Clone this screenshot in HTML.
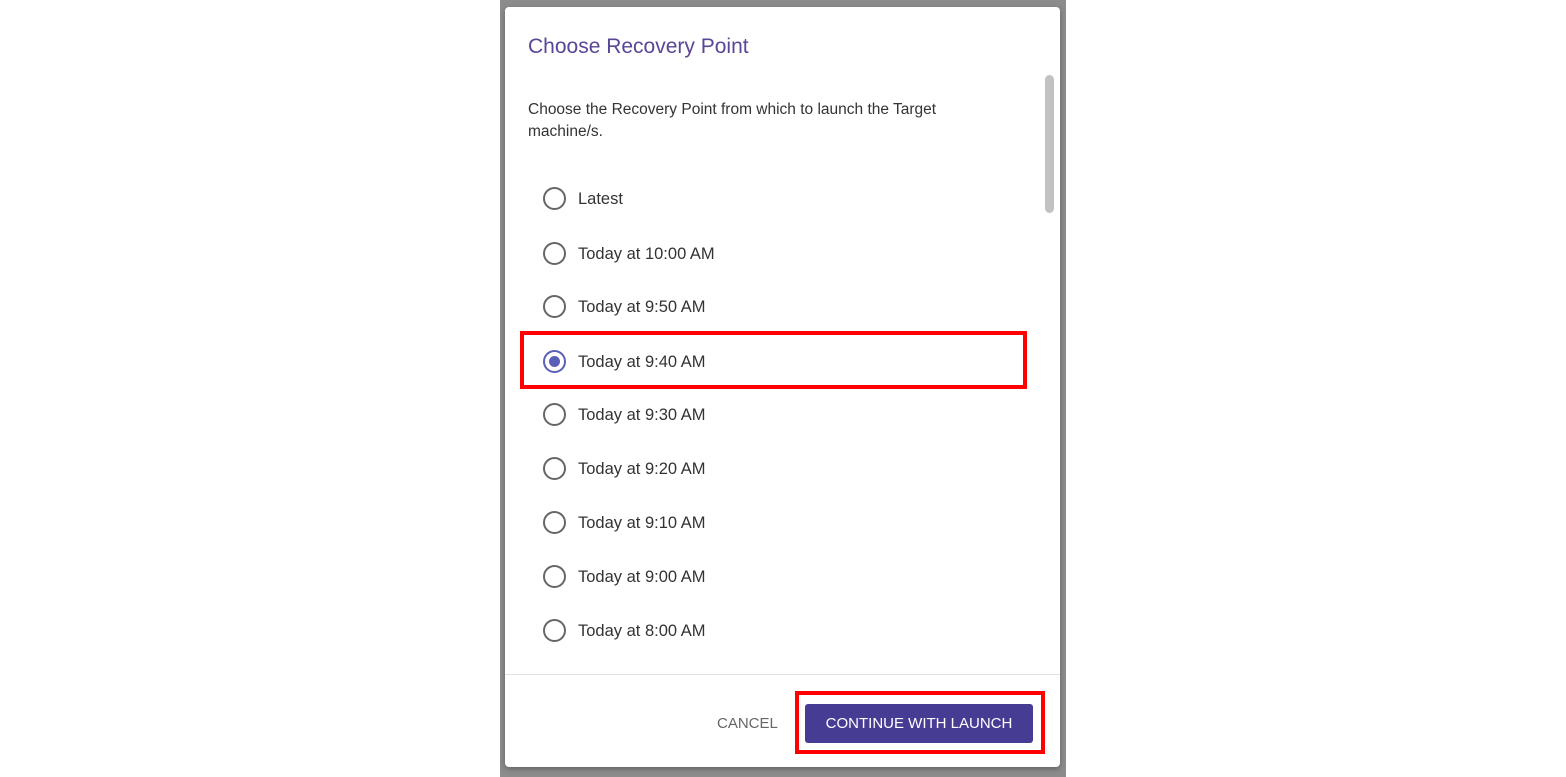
<!DOCTYPE html>
<html><head><style>
body{margin:0;width:1566px;height:777px;background:#fff;position:relative;overflow:hidden;font-family:"Liberation Sans",sans-serif;}
.ov{position:absolute;left:500px;top:0;width:566px;height:777px;background:#8c8c8c;}
.dlg{position:absolute;left:505px;top:7px;width:555px;height:760px;background:#fff;border-radius:4px;box-shadow:0 2px 6px rgba(0,0,0,.3);}
.title{position:absolute;left:528px;top:35px;font-size:21px;color:#5a4596;}
.desc{position:absolute;left:528px;top:99px;font-size:15.5px;color:#333;line-height:22px;width:470px;}
.row{position:absolute;left:543px;height:24px;font-size:16.5px;color:#333;}
.r{position:absolute;left:0;top:0;width:19px;height:19px;border:2px solid #666;border-radius:50%;}
.r.on{border-color:#5a5fb8;}
.r.on:after{content:"";position:absolute;left:4px;top:4px;width:11px;height:11px;border-radius:50%;background:#5a5fb8;}
.t{position:absolute;left:35px;top:3px;white-space:nowrap;}
.sb{position:absolute;left:1045px;top:75px;width:9px;height:138px;background:#c2c2c2;border-radius:5px;}
.div{position:absolute;left:505px;top:674px;width:555px;height:1px;background:#e2e2e2;}
.cancel{position:absolute;left:717px;top:715px;font-size:15px;color:#666;}
.btn{position:absolute;left:805px;top:704px;width:228px;height:39px;background:#473c94;border-radius:3px;color:#fff;font-size:15px;text-align:center;line-height:40px;}
.red{position:absolute;border:4px solid #f00;box-sizing:border-box;}
</style></head><body>
<div class="ov"></div>
<div class="dlg"></div>
<div class="title">Choose Recovery Point</div>
<div class="desc">Choose the Recovery Point from which to launch the Target machine/s.</div>
<div class="sb"></div>
<div class="row" style="top:187px"><div class="r"></div><div class="t">Latest</div></div>
<div class="row" style="top:242px"><div class="r"></div><div class="t">Today at 10:00 AM</div></div>
<div class="row" style="top:295px"><div class="r"></div><div class="t">Today at 9:50 AM</div></div>
<div class="row" style="top:350px"><div class="r on"></div><div class="t">Today at 9:40 AM</div></div>
<div class="row" style="top:403px"><div class="r"></div><div class="t">Today at 9:30 AM</div></div>
<div class="row" style="top:457px"><div class="r"></div><div class="t">Today at 9:20 AM</div></div>
<div class="row" style="top:511px"><div class="r"></div><div class="t">Today at 9:10 AM</div></div>
<div class="row" style="top:565px"><div class="r"></div><div class="t">Today at 9:00 AM</div></div>
<div class="row" style="top:619px"><div class="r"></div><div class="t">Today at 8:00 AM</div></div>
<div class="row" style="top:671px;height:3px;overflow:hidden"><div class="r"></div></div>
<div class="div"></div>
<div class="cancel">CANCEL</div>
<div class="btn">CONTINUE WITH LAUNCH</div>
<div class="red" style="left:520px;top:331px;width:507px;height:58px"></div>
<div class="red" style="left:795px;top:691px;width:250px;height:63px"></div>
</body></html>
